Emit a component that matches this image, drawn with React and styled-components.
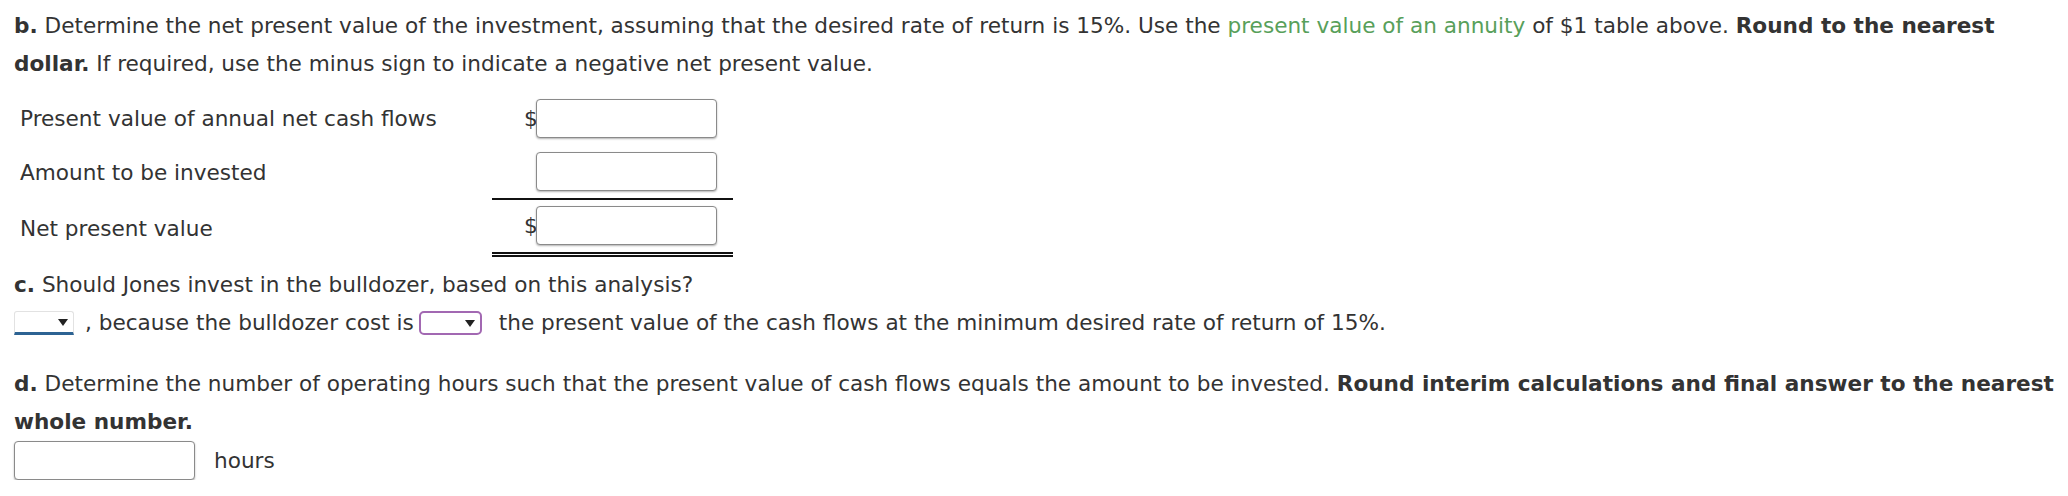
import React from "react";
import styled, { createGlobalStyle } from "styled-components";

const Global = createGlobalStyle`
  *, *::before, *::after { box-sizing: border-box; }
  html, body { margin: 0; padding: 0; background: #fff; }
  body { font-family: "DejaVu Sans", Verdana, sans-serif; color: #333; }
`;

const Page = styled.div`
  padding: 7px 14px 0 14px;
  font-size: 21.6px;
  line-height: 38px;
  color: #333;
`;

const Para = styled.p`
  margin: 0;
  margin-top: ${(p) => p.$mt || 0}px;
`;

const Link = styled.span`
  color: #58a05a;
`;

const Table = styled.div`
  margin-top: 9px;
  display: flex;
  flex-direction: column;
  width: 719px;
`;

const Row = styled.div`
  display: flex;
  align-items: stretch;
`;

const Label = styled.div`
  width: 478px;
  padding-left: 6px;
  display: flex;
  align-items: center;
  line-height: 24px;
`;

const Amount = styled.div`
  width: 241px;
  display: flex;
  align-items: center;
  justify-content: flex-end;
  padding: ${(p) => p.$pt}px 16px ${(p) => p.$pb}px 0;
  border-bottom: ${(p) =>
    p.$border === "single"
      ? "2px solid #111"
      : p.$border === "double"
      ? "5px double #111"
      : "none"};
`;

const Currency = styled.span`
  width: 12px;
  text-align: right;
  line-height: 24px;
`;

const Input = styled.div`
  width: 181px;
  height: 39px;
  border: 1px solid #8a8a8a;
  border-radius: 4px;
  background: #fff;
  box-shadow: 0 1px 2px rgba(0, 0, 0, 0.3);
  flex: none;
`;

const Select = styled.span`
  display: inline-block;
  position: relative;
  vertical-align: middle;
  width: ${(p) => p.$w}px;
  height: 24px;
  margin: -2px ${(p) => p.$mr}px 0 ${(p) => p.$ml}px;
  background: #fff;
  ${(p) =>
    p.$variant === "blue"
      ? `border: 1px solid #e2e2e2; border-bottom: 3px solid #2d6393; border-radius: 3px 3px 0 0;`
      : `border: 2px solid #a268b2; border-radius: 5px;`}
`;

const Arrow = styled.span`
  position: absolute;
  right: ${(p) => p.$r}px;
  top: 50%;
  margin-top: -3px;
  width: 0;
  height: 0;
  border-left: 5px solid transparent;
  border-right: 5px solid transparent;
  border-top: 7px solid #222;
`;

const AnswerRow = styled.div`
  display: flex;
  align-items: center;
  gap: 19px;
  margin-top: 0;
`;

const Unit = styled.span`
  line-height: 24px;
`;

export default function App() {
  return (
    <>
      <Global />
      <Page>
        <Para>
          <b>b.</b> Determine the net present value of the investment, assuming
          that the desired rate of return is 15%. Use the{" "}
          <Link>present value of an annuity</Link> of $1 table above.{" "}
          <b>Round to the nearest dollar.</b> If required, use the minus sign to
          indicate a negative net present value.
        </Para>
        <Table>
          <Row>
            <Label>Present value of annual net cash flows</Label>
            <Amount $pt={7} $pb={7}>
              <Currency>$</Currency>
              <Input />
            </Amount>
          </Row>
          <Row>
            <Label>Amount to be invested</Label>
            <Amount $pt={7} $pb={7} $border="single">
              <Input />
            </Amount>
          </Row>
          <Row>
            <Label>Net present value</Label>
            <Amount $pt={6} $pb={7} $border="double">
              <Currency>$</Currency>
              <Input />
            </Amount>
          </Row>
        </Table>
        <Para $mt={9}>
          <b>c.</b> Should Jones invest in the bulldozer, based on this analysis?
        </Para>
        <Para>
          <Select $w={60} $ml={0} $mr={11} $variant="blue">
            <Arrow $r={5} />
          </Select>
          , because the bulldozer cost is
          <Select $w={63} $ml={5} $mr={17} $variant="purple">
            <Arrow $r={5} />
          </Select>
          the present value of the cash flows at the minimum desired rate of
          return of 15%.
        </Para>
        <Para $mt={23}>
          <b>d.</b> Determine the number of operating hours such that the present
          value of cash flows equals the amount to be invested.{" "}
          <b>Round interim calculations and final answer to the nearest whole number.</b>
        </Para>
        <AnswerRow>
          <Input />
          <Unit>hours</Unit>
        </AnswerRow>
      </Page>
    </>
  );
}
